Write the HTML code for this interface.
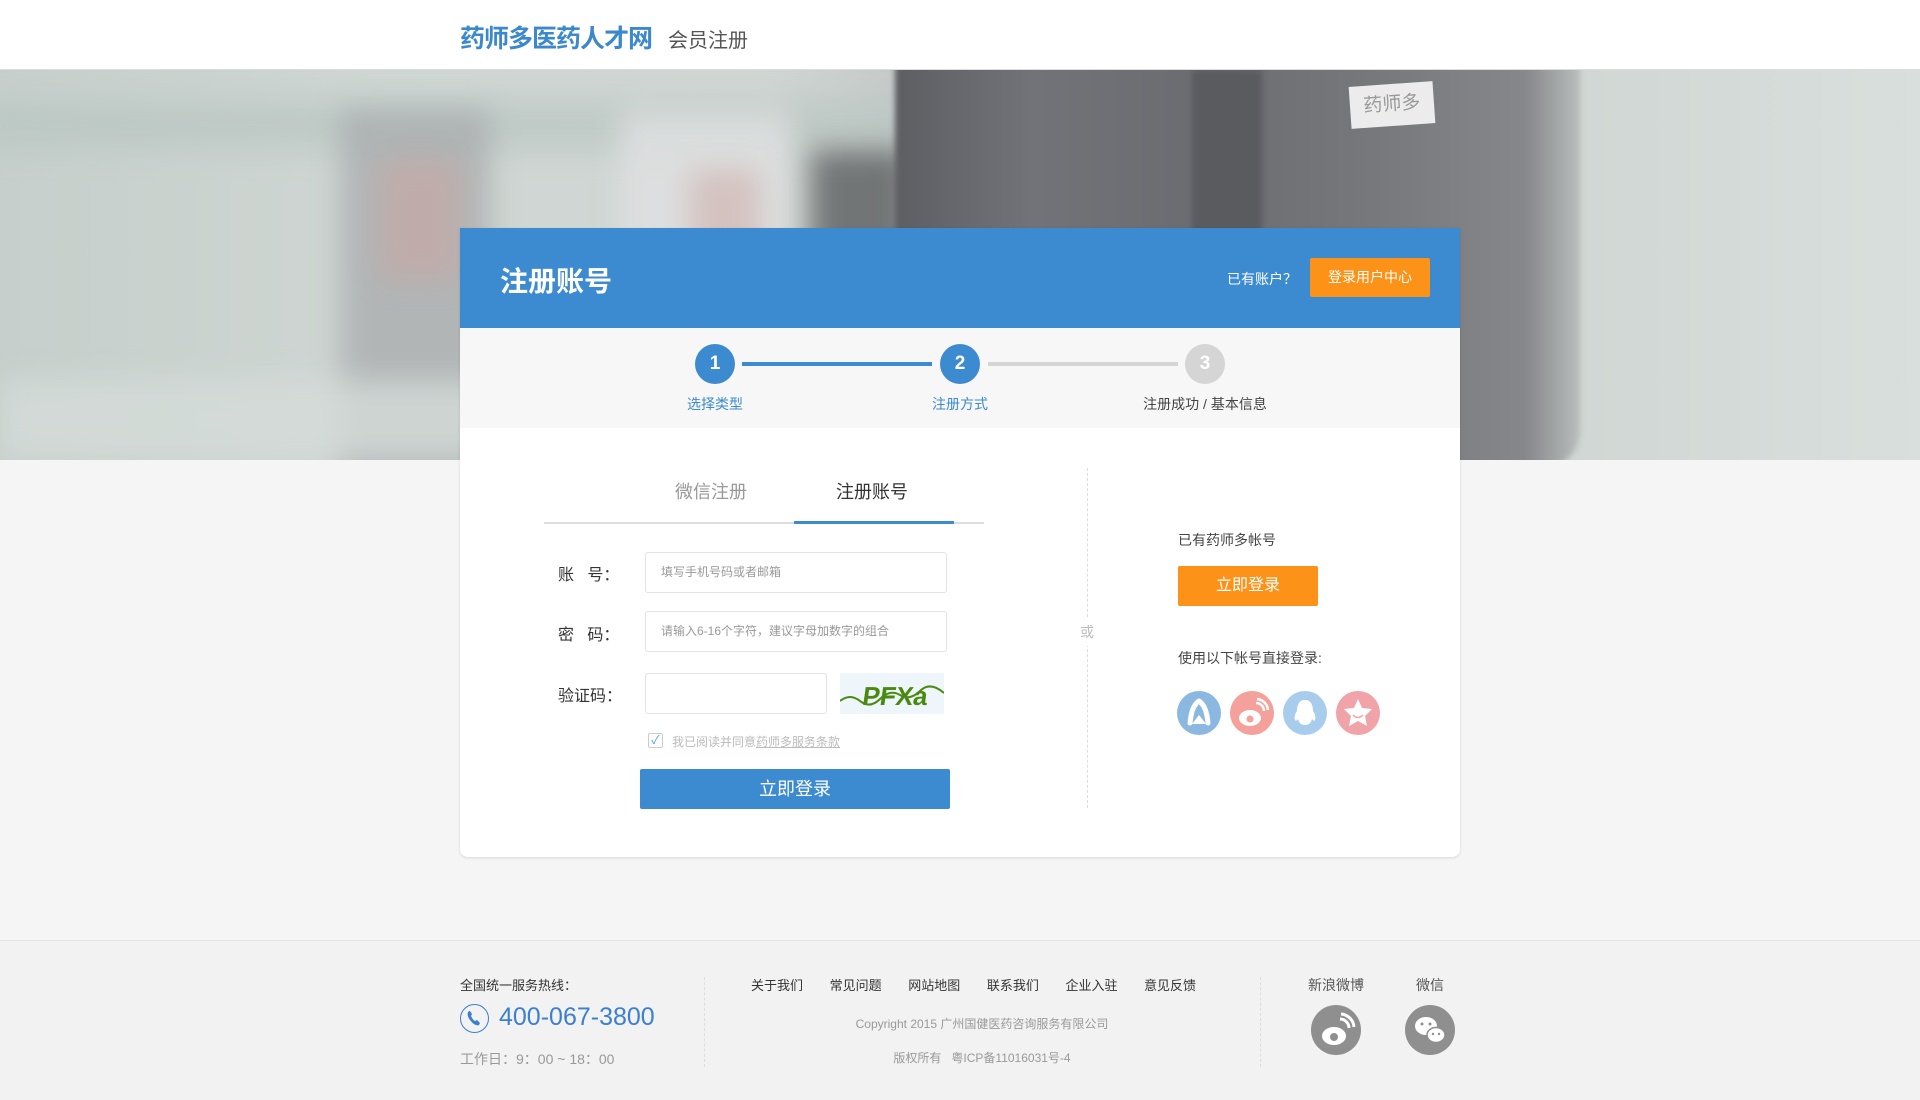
<!DOCTYPE html>
<html><head><meta charset="utf-8">
<style>
*{margin:0;padding:0;box-sizing:border-box}
body{width:1920px;height:1100px;overflow:hidden;background:#f5f5f5;font-family:"Liberation Sans","Noto Sans CJK SC",sans-serif;position:relative;color:#333}
.abs{position:absolute}
#hdr{left:0;top:0;width:1920px;height:70px;background:#fff;border-bottom:1px solid #ddd}
#banner{left:0;top:70px;width:1920px;height:390px;overflow:hidden;
background:linear-gradient(90deg,#c6cfcb 0%,#cfd6d3 20%,#d0d6d3 40%,#c3c8c7 48%,#d2d8d5 85%,#d9dfdc 100%)}
.card{left:460px;top:228px;width:1000px;height:629px;background:#fff;border-radius:0 0 8px 8px;box-shadow:0 1px 3px rgba(0,0,0,.12)}
.step{width:40px;height:40px;border-radius:50%;color:#fff;font-weight:bold;font-size:19px;text-align:center;line-height:40px}
.lbl{font-size:14px;text-align:center;width:200px}
.inp{background:#fff;border:1px solid #e3e3e3;border-radius:3px;height:41px;font-size:12px;color:#999;line-height:39px;padding-left:15px}
.fl{font-size:16px;color:#333}
.soc{width:44px;height:44px;border-radius:50%}
.ft{font-size:13px;color:#333}
.blur{filter:blur(14px)}
</style></head><body>
<div id="hdr" class="abs">
  <div class="abs" style="left:460px;top:19px;font-size:25px;font-weight:bold;color:#3b88cc;letter-spacing:-1px">药师多医药人才网</div>
  <div class="abs" style="left:668px;top:24px;font-size:20px;color:#555">会员注册</div>
</div>
<div id="banner" class="abs">
  <div class="abs blur" style="left:-20px;top:30px;width:1000px;height:50px;background:#b9c6c2;opacity:.7"></div>
  <div class="abs blur" style="left:340px;top:40px;width:150px;height:380px;background:#a8abad;opacity:.75"></div>
  <div class="abs blur" style="left:380px;top:90px;width:80px;height:120px;background:#c9a7a3;opacity:.6"></div>
  <div class="abs blur" style="left:620px;top:40px;width:170px;height:380px;background:#e0e1e2;opacity:.8"></div>
  <div class="abs blur" style="left:690px;top:100px;width:70px;height:110px;background:#cfb0ab;opacity:.6"></div>
  <div class="abs blur" style="left:810px;top:80px;width:100px;height:260px;background:#3a3b3d;opacity:.6"></div>
  <div class="abs blur" style="left:0;top:310px;width:900px;height:80px;background:#d5dcd9;opacity:.8"></div>
  <div class="abs" style="left:895px;top:-10px;width:685px;height:410px;background:linear-gradient(90deg,#5d5e62 0%,#727378 20%,#6b6c70 45%,#77787c 70%,#86878b 92%,#b9bdbc 100%);border-radius:0 0 40px 120px;filter:blur(3px)"></div>
  <div class="abs" style="left:1192px;top:0;width:70px;height:300px;background:#5a5b5f;filter:blur(3px)"></div>
  <div class="abs" style="left:1350px;top:14px;width:84px;height:42px;background:#ececec;color:#999;font-size:19px;text-align:center;line-height:42px;transform:rotate(-4deg)">药师多</div>
</div>
<div class="card abs">
  <div class="abs" style="left:0;top:0;width:1000px;height:100px;background:#3c8ad0">
    <div class="abs" style="left:40px;top:32px;font-size:28px;font-weight:bold;color:#fff">注册账号</div>
    <div class="abs" style="left:767px;top:41px;font-size:14px;color:#fff">已有账户？</div>
    <div class="abs" style="left:850px;top:30px;width:120px;height:39px;background:#fd9219;border-radius:2px;color:#fff;font-size:14px;text-align:center;line-height:39px">登录用户中心</div>
  </div>
  <div class="abs" style="left:0;top:100px;width:1000px;height:100px;background:#f7f7f7">
    <div class="abs" style="left:282px;top:34px;width:190px;height:4px;background:#3c8ad0"></div>
    <div class="abs" style="left:528px;top:34px;width:190px;height:4px;background:#d5d5d5"></div>
    <div class="abs step" style="left:235px;top:16px;background:#3c8ad0">1</div>
    <div class="abs step" style="left:480px;top:16px;background:#3c8ad0">2</div>
    <div class="abs step" style="left:725px;top:16px;background:#d5d5d5">3</div>
    <div class="abs lbl" style="left:155px;top:66px;color:#3c8ad0">选择类型</div>
    <div class="abs lbl" style="left:400px;top:66px;color:#3c8ad0">注册方式</div>
    <div class="abs lbl" style="left:645px;top:66px;color:#444">注册成功 / 基本信息</div>
  </div>
  <div class="abs" style="left:84px;top:294px;width:440px;height:2px;background:#ddd"></div>
  <div class="abs" style="left:334px;top:293px;width:160px;height:3px;background:#3c8ad0"></div>
  <div class="abs" style="left:215px;top:250px;font-size:18px;color:#999">微信注册</div>
  <div class="abs" style="left:376px;top:250px;font-size:18px;color:#333">注册账号</div>
  <div class="abs fl" style="left:98px;top:333px">账&nbsp;&nbsp;&nbsp;号：</div>
  <div class="abs inp" style="left:185px;top:324px;width:302px">填写手机号码或者邮箱</div>
  <div class="abs fl" style="left:98px;top:393px">密&nbsp;&nbsp;&nbsp;码：</div>
  <div class="abs inp" style="left:185px;top:383px;width:302px">请输入6-16个字符，建议字母加数字的组合</div>
  <div class="abs fl" style="left:98px;top:454px">验证码：</div>
  <div class="abs inp" style="left:185px;top:445px;width:182px"></div>
  <div class="abs" style="left:380px;top:445px;width:104px;height:41px;background:#eef6fb;overflow:hidden">
    <svg width="104" height="41"><path d="M0 28 Q10 20 20 28 T40 26 T60 22 T80 18 T104 20" stroke="#4a8a10" stroke-width="2" fill="none"/>
    <text x="26" y="32" font-family="Liberation Sans" font-weight="bold" font-size="26" fill="#4a8a10" transform="skewX(-8)">PFXa</text></svg>
  </div>
  <div class="abs" style="left:188px;top:505px;width:15px;height:15px;border:1px solid #ccc;border-radius:2px;background:#fff;color:#4aa3df;font-size:12px;line-height:13px;text-align:center">✓</div>
  <div class="abs" style="left:212px;top:505px;font-size:12px;color:#bbb">我已阅读并同意<span style="text-decoration:underline">药师多服务条款</span></div>
  <div class="abs" style="left:180px;top:541px;width:310px;height:40px;background:#3c8ad0;border-radius:2px;color:#fff;font-size:18px;text-align:center;line-height:40px">立即登录</div>
  <div class="abs" style="left:627px;top:240px;height:340px;border-left:1px dashed #ddd"></div>
  <div class="abs" style="left:620px;top:390px;background:#fff;font-size:14px;color:#bbb;padding:4px 0">或</div>
  <div class="abs" style="left:718px;top:302px;font-size:14px;color:#444">已有药师多帐号</div>
  <div class="abs" style="left:718px;top:338px;width:140px;height:40px;background:#fd9219;border-radius:2px;color:#fff;font-size:16px;text-align:center;line-height:40px">立即登录</div>
  <div class="abs" style="left:718px;top:420px;font-size:14px;color:#444">使用以下帐号直接登录:</div>
  <div class="abs soc" style="left:717px;top:463px;background:#8ab8e0"><svg width="44" height="44"><path d="M22 10 C16 14 14 22 13 32 M22 10 C28 14 30 22 31 32" stroke="#fff" stroke-width="5" fill="none" stroke-linecap="round"/><path d="M22 24 L15 33 L29 33Z" fill="#fff"/></svg></div>
  <div class="abs soc" style="left:770px;top:463px;background:#f3a19a"><svg width="44" height="44"><ellipse cx="20" cy="27" rx="11" ry="8" fill="#fff"/><circle cx="20" cy="28" r="3.5" fill="#f3a19a"/><path d="M26 12 A8 8 0 0 1 34 20 M27 8 A12 12 0 0 1 38 19" stroke="#fff" stroke-width="2.5" fill="none"/></svg></div>
  <div class="abs soc" style="left:823px;top:463px;background:#a8cdec"><svg width="44" height="44"><path d="M22 9 C15 9 14 16 14 20 C11 24 11 29 13 30 L15 28 C16 32 18 34 22 34 C26 34 28 32 29 28 L31 30 C33 29 33 24 30 20 C30 16 29 9 22 9Z" fill="#fff"/></svg></div>
  <div class="abs soc" style="left:876px;top:463px;background:#f1a3aa"><svg width="44" height="44"><path d="M22 8 L26 17 L36 18 L29 25 L31 35 L22 30 L13 35 L15 25 L8 18 L18 17Z" fill="#fff"/><path d="M17 24 Q22 29 27 24" stroke="#f1a3aa" stroke-width="1.5" fill="none"/></svg></div>
</div>
<div class="abs" style="left:0;top:940px;width:1920px;height:160px;background:#f2f2f2;border-top:1px solid #e3e3e3">
  <div class="abs ft" style="left:460px;top:34px">全国统一服务热线：</div>
  <div class="abs" style="left:460px;top:63px;width:29px;height:29px;border:1.5px solid #3b7fcf;border-radius:50%"><svg width="26" height="26"><path d="M8 6 C6 8 6 11 9 15 C12 19 15 21 18 20 L19 18 L16 15 L14 16 C12 15 11 13 10 11 L11 9 L9 6Z" fill="#3b7fcf"/></svg></div>
  <div class="abs" style="left:499px;top:62px;font-size:25px;color:#3b7fcf">400-067-3800</div>
  <div class="abs" style="left:460px;top:108px;font-size:14px;color:#999">工作日：9：00 ~ 18：00</div>
  <div class="abs" style="left:704px;top:36px;height:90px;border-left:1px dashed #ddd"></div>
  <div class="abs ft" style="left:751px;top:34px;word-spacing:23px">关于我们 常见问题 网站地图 联系我们 企业入驻 意见反馈</div>
  <div class="abs" style="left:782px;top:74px;width:400px;text-align:center;font-size:12px;color:#999">Copyright 2015 广州国健医药咨询服务有限公司</div>
  <div class="abs" style="left:782px;top:108px;width:400px;text-align:center;font-size:12px;color:#999">版权所有&nbsp;&nbsp;&nbsp;粤ICP备11016031号-4</div>
  <div class="abs" style="left:1260px;top:36px;height:90px;border-left:1px dashed #ddd"></div>
  <div class="abs" style="left:1296px;top:34px;width:80px;text-align:center;font-size:14px;color:#555">新浪微博</div>
  <div class="abs" style="left:1390px;top:34px;width:80px;text-align:center;font-size:14px;color:#555">微信</div>
  <div class="abs" style="left:1311px;top:64px;width:50px;height:50px;border-radius:50%;background:#8f8f8f"><svg width="50" height="50"><ellipse cx="23" cy="31" rx="12" ry="9" fill="#fff"/><circle cx="23" cy="32" r="4" fill="#8f8f8f"/><path d="M29 14 A9 9 0 0 1 38 23 M30 9 A14 14 0 0 1 43 22" stroke="#fff" stroke-width="3" fill="none"/></svg></div>
  <div class="abs" style="left:1405px;top:64px;width:50px;height:50px;border-radius:50%;background:#8f8f8f"><svg width="50" height="50"><ellipse cx="21" cy="21" rx="11" ry="9" fill="#fff"/><ellipse cx="31" cy="30" rx="9" ry="7.5" fill="#fff" stroke="#8f8f8f" stroke-width="1.5"/><circle cx="17" cy="19" r="1.5" fill="#8f8f8f"/><circle cx="25" cy="19" r="1.5" fill="#8f8f8f"/><circle cx="28" cy="29" r="1.2" fill="#8f8f8f"/><circle cx="34" cy="29" r="1.2" fill="#8f8f8f"/></svg></div>
</div>
</body></html>
